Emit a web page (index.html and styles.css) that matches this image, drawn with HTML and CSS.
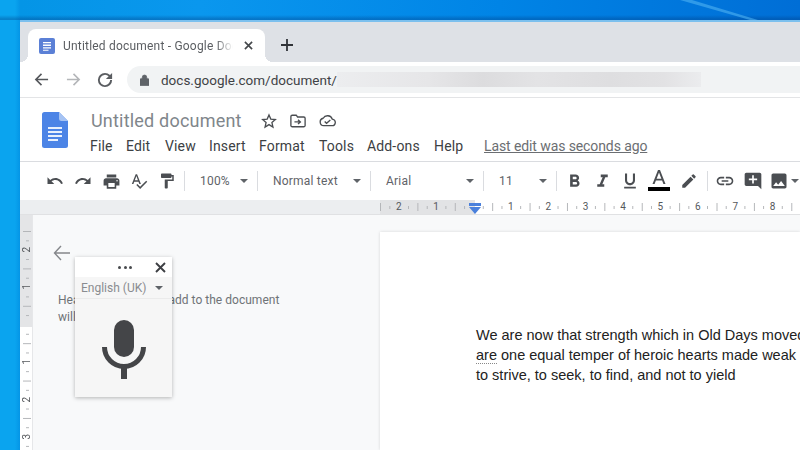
FILE: index.html
```html
<!DOCTYPE html>
<html lang="en">
<head>
<meta charset="utf-8">
<title>Untitled document - Google Docs</title>
<link rel="stylesheet" href="styles.css">
</head>
<body>
<div class="desktop">
  <svg class="streak" width="200" height="20" viewBox="0 0 200 20"><path d="M80 0L150 20H158L92 0Z" fill="#4fb2f2" opacity=".6"/></svg>
  <div class="window">
    <div class="tabstrip">
      <div class="tab">
        <svg class="favicon" width="16" height="16" viewBox="0 0 16 16"><rect width="16" height="16" rx="2" fill="#5b80d6"/><path d="M4 4h8v1.300H4zM4 6.600h8v1.300H4zM4 9.200h8v1.300H4zM4 11.800h5.500v1H4z" fill="#fff"/></svg>
        <span class="tabtitle">Untitled document - Google Docs</span>
        <svg class="tabclose" width="9" height="9" viewBox="0 0 10 10"><path d="M1 1l8 8M9 1l-8 8" stroke="#44474b" stroke-width="1.800"/></svg>
      </div>
      <svg class="newtab" width="12" height="12" viewBox="0 0 12 12"><path d="M6 0v12M0 6h12" stroke="#303338" stroke-width="1.800"/></svg>
    </div>
    <div class="navbar">
      <svg class="nav" width="15" height="15" viewBox="0 0 16 16"><path d="M15 8H2M8 2L2 8l6 6" fill="none" stroke="#54575b" stroke-width="1.700"/></svg>
      <svg class="nav nav-fwd" width="15" height="15" viewBox="0 0 16 16"><path d="M1 8h13M8 2l6 6-6 6" fill="none" stroke="#b4b6b9" stroke-width="1.700"/></svg>
      <svg class="nav nav-reload" width="16" height="16" viewBox="3 3 18 18"><path d="M17.650 6.350A7.960 7.960 0 0012 4a8 8 0 108 8h-2.200a5.800 5.800 0 11-1.700-4.100L13 11h7V4z" fill="#5a5d61"/></svg>
      <div class="omnibox">
        <svg width="9" height="12" viewBox="0 0 10 13"><path d="M1 5h8a1 1 0 011 1v6a1 1 0 01-1 1H1a1 1 0 01-1-1V6a1 1 0 011-1zM2.500 5V3.500a2.500 2.500 0 015 0V5" fill="#5f6368" stroke="#5f6368" stroke-width=".8"/></svg>
        <span class="url">docs.google.com/document/</span>
        <span class="blurred"></span>
      </div>
    </div>
    <div class="docheader">
      <svg class="logo" width="26" height="36" viewBox="0 0 26 36"><path d="M2.500 0H17l9 9v24.500a2.500 2.500 0 01-2.500 2.500h-21A2.500 2.500 0 010 33.500v-31A2.500 2.500 0 012.500 0z" fill="#4c84e6"/><path d="M17 0l9 9h-6.500A2.500 2.500 0 0117 6.500z" fill="#a6c3f3"/><path d="M6 15h14v2H6zM6 19h14v2H6zM6 23h14v2H6zM6 27h10v2H6z" fill="#e8f0fd"/></svg>
      <div class="docinfo">
        <div class="titlerow">
          <span class="doctitle">Untitled document</span>
          <span class="titleicons">
            <svg width="16" height="16" viewBox="0 0 24 24"><path d="M12 3l2.700 6.200 6.800.6-5.100 4.500 1.500 6.700L12 17.400 6.100 21l1.500-6.700L2.500 9.800l6.800-.6z" fill="none" stroke="#4a4d51" stroke-width="2"/></svg>
            <svg width="16" height="14" viewBox="0 0 18 15"><path d="M1 2.500A1.500 1.500 0 012.500 1H7l1.500 2h7A1.500 1.500 0 0117 4.500v8a1.500 1.500 0 01-1.500 1.500h-13A1.500 1.500 0 011 12.500z" fill="none" stroke="#4a4d51" stroke-width="1.500"/><path d="M5 8.500h6M9 6l2.700 2.500L9 11" fill="none" stroke="#4a4d51" stroke-width="1.500"/></svg>
            <svg width="17" height="13" viewBox="0 0 18 13"><path d="M5 12a4 4 0 01-.6-7.900A5.300 5.300 0 0114 5a3.500 3.500 0 01-.5 7z" fill="none" stroke="#4a4d51" stroke-width="1.400"/><path d="M6 7.500l2 2 4-3.500" fill="none" stroke="#4a4d51" stroke-width="1.400"/></svg>
          </span>
        </div>
        <div class="menurow">
          <span class="menu m-file">File</span><span class="menu m-edit">Edit</span><span class="menu m-view">View</span><span class="menu m-insert">Insert</span><span class="menu m-format">Format</span><span class="menu m-tools">Tools</span><span class="menu m-addons">Add-ons</span><span class="menu m-help">Help</span><span class="lastedit">Last edit was seconds ago</span>
        </div>
      </div>
    </div>
    <div class="toolbar">
      <span class="tb i28"><svg width="18" height="18" viewBox="0 0 24 24"><path d="M12.500 8c-2.650 0-5.050.99-6.900 2.600L2 7v9h9l-3.620-3.620c1.390-1.160 3.160-1.880 5.120-1.880 3.540 0 6.550 2.310 7.600 5.500l2.370-.78C21.080 11.030 17.150 8 12.500 8z"/></svg></span>
      <span class="tb i28"><svg width="18" height="18" viewBox="0 0 24 24"><path d="M18.400 10.600C16.550 8.990 14.150 8 11.500 8c-4.650 0-8.580 3.030-9.960 7.220L3.900 16c1.050-3.190 4.050-5.500 7.600-5.500 1.950 0 3.730.72 5.120 1.880L13 16h9V7l-3.600 3.600z"/></svg></span>
      <span class="tb i28"><svg width="19" height="19" viewBox="0 0 24 24"><path d="M19 8H5c-1.660 0-3 1.340-3 3v6h4v4h12v-4h4v-6c0-1.660-1.340-3-3-3zm-3 11H8v-5h8v5zm3-7c-.55 0-1-.45-1-1s.45-1 1-1 1 .45 1 1-.45 1-1 1zm-1-9H6v4h12V3z"/></svg></span>
      <span class="tb i28"><svg width="18" height="18" viewBox="0 0 24 24"><path d="M12.450 16h2.090L9.430 3H7.570L2.460 16h2.090l1.120-3h5.640l1.140 3zm-6.020-5L8.500 5.480 10.570 11H6.430zm15.160.59l-8.090 8.090L9.830 16l-1.410 1.410 5.090 5.090L23 13l-1.410-1.410z"/></svg></span>
      <span class="tb i28"><svg width="18" height="18" viewBox="0 0 24 24"><path d="M18 4V3c0-.55-.45-1-1-1H5c-.55 0-1 .45-1 1v4c0 .55.45 1 1 1h12c.55 0 1-.45 1-1V6h1v4H9v11c0 .55.45 1 1 1h2c.55 0 1-.45 1-1v-9h8V4h-3z"/></svg></span>
      <span class="sep s-a"></span>
      <span class="drop w-zoom"><span class="droplabel">100%</span><i class="caret"></i></span>
      <span class="sep"></span>
      <span class="drop w-style"><span class="droplabel">Normal text</span><i class="caret"></i></span>
      <span class="sep"></span>
      <span class="drop w-font"><span class="droplabel">Arial</span><i class="caret"></i></span>
      <span class="sep"></span>
      <span class="drop w-size"><span class="droplabel">11</span><i class="caret"></i></span>
      <span class="sep"></span>
      <span class="tb i28 s-b"><svg width="21" height="21" viewBox="0 0 24 24"><path d="M15.600 10.790c.97-.67 1.650-1.770 1.650-2.790 0-2.260-1.750-4-4-4H7v14h7.040c2.090 0 3.710-1.700 3.710-3.790 0-1.520-.86-2.820-2.150-3.420zM10 6.500h3c.83 0 1.500.67 1.500 1.500s-.67 1.500-1.500 1.500h-3v-3zm3.500 9H10v-3h3.500c.83 0 1.500.67 1.500 1.500s-.67 1.500-1.500 1.500z"/></svg></span>
      <span class="tb i28"><svg width="21" height="21" viewBox="0 0 24 24"><path d="M10 4v3h2.210l-3.420 8H6v3h8v-3h-2.210l3.420-8H18V4z"/></svg></span>
      <span class="tb i28"><svg width="20" height="20" viewBox="0 0 24 24"><path d="M12 17c3.310 0 6-2.690 6-6V3h-2.500v8c0 1.930-1.570 3.500-3.500 3.500S8.500 12.930 8.500 11V3H6v8c0 3.310 2.690 6 6 6zm-7 2v2h14v-2H5z"/></svg></span>
      <span class="tb i30 textcolor"><svg width="18" height="14" viewBox="0 0 18 14"><path d="M8 0h2l5.500 14h-2.100l-1.300-3.500H5.900L4.600 14H2.500zM6.600 8.700h4.800L9 2.400z"/></svg><i class="colorbar"></i></span>
      <span class="tb i30"><svg width="18" height="18" viewBox="0 0 24 24"><path d="M3 17.250V21h3.750L17.810 9.940l-3.750-3.750L3 17.250zM20.710 7.040a1 1 0 000-1.410l-2.340-2.340a1 1 0 00-1.410 0l-1.830 1.830 3.750 3.750 1.830-1.830z"/></svg></span>
      <span class="sep s-c"></span>
      <span class="tb i28 s-d"><svg width="20" height="20" viewBox="0 0 24 24"><path d="M3.900 12c0-1.710 1.390-3.100 3.100-3.100h4V7H7c-2.760 0-5 2.240-5 5s2.240 5 5 5h4v-1.900H7c-1.710 0-3.100-1.390-3.100-3.100zM8 13h8v-2H8v2zm9-6h-4v1.900h4c1.710 0 3.100 1.390 3.100 3.100s-1.390 3.100-3.100 3.100h-4V17h4c2.760 0 5-2.240 5-5s-2.240-5-5-5z"/></svg></span>
      <span class="tb i28"><svg width="20" height="20" viewBox="0 0 24 24"><path d="M20 2H4c-1.100 0-2 .9-2 2v12c0 1.100.9 2 2 2h14l4 4V4c0-1.100-.9-2-2-2zm-3 9h-4v4h-2v-4H7V9h4V5h2v4h4v2z"/></svg></span>
      <span class="tb i24"><svg width="20" height="20" viewBox="0 0 24 24"><path d="M21 19V5c0-1.100-.9-2-2-2H5c-1.100 0-2 .9-2 2v14c0 1.100.9 2 2 2h14c1.100 0 2-.9 2-2zM8.500 13.500l2.500 3.010L14.500 12l4.500 6H5l3.500-4.500z"/></svg></span>
      <i class="caret"></i>
    </div>
    <div class="hruler">
      <span class="rn">2</span><span class="rn">1</span><span class="rn"></span><span class="rn">1</span><span class="rn">2</span><span class="rn">3</span><span class="rn">4</span><span class="rn">5</span><span class="rn">6</span><span class="rn">7</span><span class="rn">8</span>
      <svg class="marker" width="12" height="12" viewBox="0 0 12 12"><path d="M0 0h12v3H0z" fill="#4a80dc"/><path d="M0 4h12L6 11z" fill="#4a80dc"/></svg>
    </div>
    <div class="workspace">
      <div class="vruler">
        <span class="vn">2</span><span class="vn">1</span><span class="vn"></span><span class="vn">1</span><span class="vn">2</span><span class="vn">3</span>
      </div>
      <div class="sidebar">
        <svg class="back" width="17" height="16" viewBox="0 0 17 16"><path d="M17 8H1.500M8 1L1.500 8 8 15" fill="none" stroke="#85878b" stroke-width="1.400"/></svg>
        <p class="outline">Headings which you add to the document will appear here.</p>
        <div class="voice">
          <div class="voicehead">
            <span class="dots"><i></i><i></i><i></i></span>
            <svg width="11" height="11" viewBox="0 0 11 11"><path d="M1 1l9 9M10 1l-9 9" stroke="#3d3f43" stroke-width="1.900"/></svg>
          </div>
          <div class="voicelang"><span>English (UK)</span><i class="caret"></i></div>
          <div class="voicebody">
            <svg width="44" height="59" viewBox="0 0 44 59"><rect x="12" y="0" width="20" height="37" rx="10" fill="#444548"/><path d="M2.500 27a19.500 19.500 0 0039 0" fill="none" stroke="#444548" stroke-width="5"/><path d="M22 45v14" stroke="#444548" stroke-width="6"/></svg>
          </div>
        </div>
      </div>
      <div class="page">
        <p class="line">We are now that strength which in Old Days moved</p>
        <p class="line"><span class="spell">are</span> one equal temper of heroic hearts made weak</p>
        <p class="line">to strive, to seek, to find, and not to yield</p>
      </div>
    </div>
  </div>
</div>
</body>
</html>
```
FILE: styles.css
```css
* { box-sizing: border-box; }
html, body { margin: 0; padding: 0; width: 800px; height: 450px; overflow: hidden; }
body { font-family: Roboto, "Liberation Sans", sans-serif; color: #3c4043; }
p { margin: 0; }
i { display: block; }

.desktop {
  position: relative;
  width: 800px; height: 450px;
  padding: 20px 0 0 20px;
  background:
    linear-gradient(180deg, rgba(0,50,120,0) 0, rgba(0,50,120,0) 15px, rgba(0,60,130,.35) 19px, rgba(0,60,130,.35) 20px, rgba(0,0,0,0) 20px),
    linear-gradient(90deg, #0aa4ef 0, #0aa4ef 15px, #0495e6 20px, #0a97ee 200px, #0084e6 500px, #006ed6 800px);
}
.streak { position: absolute; left: 600px; top: 0; }

.window {
  width: 780px; height: 430px;
  border-top: 2px solid #7cc0ee;
  background: #fff;
  display: flex; flex-direction: column;
  overflow: hidden;
}

/* Browser chrome */
.tabstrip {
  height: 40px; flex: none;
  padding: 7px 0 0 8px;
  background: #dee1e6;
  display: flex; align-items: flex-start;
}
.tab {
  position: relative;
  width: 237px; height: 33px;
  background: #fff;
  border-radius: 8px 8px 0 0;
  padding: 0 12px 0 11px;
  display: flex; align-items: center;
  gap: 8px;
}
.tab::before, .tab::after {
  content: "";
  position: absolute; bottom: 0;
  width: 8px; height: 8px;
}
.tab::before { left: -8px; background: radial-gradient(circle at 0 0, transparent 8px, #fff 8px); }
.tab::after { right: -8px; background: radial-gradient(circle at 100% 0, transparent 8px, #fff 8px); }
.favicon { flex: none; }
.tabtitle {
  flex: 1; min-width: 0;
  font: 12px Roboto, sans-serif;
  letter-spacing: .2px;
  color: #5b5e62;
  white-space: nowrap; overflow: hidden;
  -webkit-mask-image: linear-gradient(90deg, #000 90%, transparent);
  mask-image: linear-gradient(90deg, #000 90%, transparent);
}
.tabclose { flex: none; margin-left: 3px; }
.newtab { margin: 10px 0 0 16px; }

.navbar {
  height: 36px; flex: none;
  padding: 4px 0 4px 14px;
  display: flex; align-items: center;
  border-bottom: 1px solid #e3e4e6;
}
.nav { flex: none; margin-right: 17px; }
.nav-reload { margin-left: -1px; margin-right: 14px; }
.omnibox {
  flex: 1; height: 27px;
  background: #f1f3f4;
  border-radius: 14px 0 0 14px;
  padding-left: 13px;
  display: flex; align-items: center;
}
.url { font: 13.500px Roboto, sans-serif; color: #3f4246; margin-left: 12px; white-space: nowrap; }
.blurred {
  width: 364px; height: 15px;
  background: linear-gradient(90deg, #ecedef, #e6e6e8 25%, #dcdcde 40%, #e3e3e5 55%, #dedee0 75%, #e2e2e4 90%, #ebecee);
}

/* Docs header */
.docheader {
  height: 64px; flex: none;
  padding: 13px 0 0 22px;
  display: flex;
  border-bottom: 1px solid #dadce0;
}
.logo { flex: none; margin-top: 1px; }
.docinfo { margin-left: 22px; margin-top: -1px; }
.titlerow { display: flex; align-items: center; height: 21px; padding-left: 1px; }
.doctitle { font: 18px Roboto, sans-serif; letter-spacing: .2px; color: #80868b; width: 170px; white-space: nowrap; }
.titleicons { display: flex; align-items: center; gap: 13px; }
.menurow { display: flex; align-items: center; height: 20px; margin-top: 5px; font-size: 14px; letter-spacing: .15px; color: #3c4043; }
.menu { flex: none; }
.m-file { width: 36px; }
.m-edit { width: 39px; }
.m-view { width: 44px; }
.m-insert { width: 50px; }
.m-format { width: 60px; }
.m-tools { width: 48px; }
.m-addons { width: 67px; }
.m-help { width: 50px; }
.lastedit { color: #6b6e72; letter-spacing: -.1px; text-decoration: underline; white-space: nowrap; }

/* Toolbar */
.toolbar {
  height: 38px; flex: none;
  display: flex; align-items: center;
  padding-left: 21px;
  background: #fff;
}
.tb { flex: none; display: flex; align-items: center; justify-content: center; height: 30px; }
.tb svg { fill: #4b4e52; display: block; }
.i28 { width: 28px; }
.i30 { width: 30px; }
.i24 { width: 24px; }
.sep { flex: none; width: 1px; height: 20px; background: #dadce0; }
.s-a { margin-left: 3px; }
.s-b { margin-left: 3px; }
.s-c { margin-left: 3px; }
.s-d { margin-left: 3px; }
.drop { flex: none; display: flex; align-items: center; justify-content: space-between; padding-left: 15px; padding-right: 9px; font-size: 12px; letter-spacing: .2px; color: #5f6368; }
.w-zoom { width: 72px; }
.w-style { width: 112px; }
.w-font { width: 112px; }
.w-size { width: 72px; }
.caret { flex: none; width: 0; height: 0; border: 4px solid transparent; border-top: 4px solid #5f6368; border-bottom: 0; }
.textcolor { flex-direction: column; justify-content: flex-start; padding-top: 4px; }
.colorbar { width: 22px; height: 4px; margin-top: 3px; background: #000; }

/* Rulers */
.hruler {
  position: relative;
  height: 15px; flex: none;
  display: flex;
  padding-left: 360px;
  border-bottom: 1px solid #e0e1e3;
  background: linear-gradient(90deg, #eceef0 360px, #e2e3e5 360px, #e2e3e5 455px, #fff 455px);
}
.hruler::before {
  content: "";
  position: absolute; left: 360px; right: 0; top: 3px; height: 8px;
  background-image:
    linear-gradient(90deg, #b4b6b9 1px, transparent 1px),
    linear-gradient(90deg, #b4b6b9 1px, transparent 1px);
  background-size: 37.400px 8px, 18.700px 3px;
  background-position: 0 0, 9.350px 3px;
  background-repeat: repeat-x;
}
.rn {
  position: relative;
  flex: none; width: 37.400px;
  font: 10px/14px Roboto, sans-serif;
  color: #55585c;
  text-align: center;
}
.marker { position: absolute; left: 449px; top: 3px; }

.workspace { flex: 1; min-height: 0; display: flex; background: #f8f9fa; }
.vruler {
  position: relative;
  flex: none; width: 13px;
  padding-top: 16px;
  display: flex; flex-direction: column;
  border-right: 1px solid #e6e7e9;
  background: linear-gradient(180deg, #e4e5e7 112px, #fff 112px);
}
.vruler::before {
  content: "";
  position: absolute; left: 3px; top: 16px; bottom: 0; width: 8px;
  background-image:
    linear-gradient(180deg, #b4b6b9 1px, transparent 1px),
    linear-gradient(180deg, #b4b6b9 1px, transparent 1px);
  background-size: 8px 37.400px, 3px 18.700px;
  background-position: 0 0, 3px 9.350px;
  background-repeat: repeat-y;
}
.vn {
  position: relative;
  flex: none; height: 37.400px;
  display: flex; align-items: center; justify-content: center;
  writing-mode: vertical-rl;
  transform: rotate(180deg);
  font: 10px/13px Roboto, sans-serif;
  color: #55585c;
}
.sidebar { position: relative; flex: none; width: 347px; padding: 30px 0 0 20px; }
.back { display: block; }
.outline {
  width: 232px;
  margin: 31px 0 0 5px;
  font-size: 12px; line-height: 17px;
  letter-spacing: .02px;
  color: #6f7377;
}
.voice {
  position: absolute; left: 42px; top: 42px;
  width: 97px; height: 140px;
  background: #f6f6f6;
  box-shadow: 0 1px 4px rgba(0,0,0,.28);
  display: flex; flex-direction: column;
}
.voicehead {
  height: 20px; flex: none;
  background: #fff;
  display: flex; align-items: center; justify-content: flex-end;
  padding-right: 6px;
  gap: 23px;
}
.dots { display: flex; gap: 2.500px; }
.dots i { width: 3px; height: 3px; border-radius: 50%; background: #47494d; }
.voicelang {
  height: 22px; flex: none;
  display: flex; align-items: center; justify-content: space-between;
  padding: 0 9px 0 6px;
  border-bottom: 1px solid #ebebeb;
  font-size: 12px; color: #8a8c90;
}
.voicebody { flex: 1; display: flex; justify-content: center; padding-top: 21px; }
.page {
  flex: 1; min-width: 0;
  margin-top: 17px;
  padding: 93px 0 0 96px;
  background: #fff;
  box-shadow: 0 0 3px rgba(0,0,0,.14);
  overflow: hidden;
}
.line {
  font: 14.500px/20px "Liberation Sans", Arial, sans-serif;
  color: #222;
  white-space: nowrap;
}
.spell { border-bottom: 1px dotted #888; }
```
